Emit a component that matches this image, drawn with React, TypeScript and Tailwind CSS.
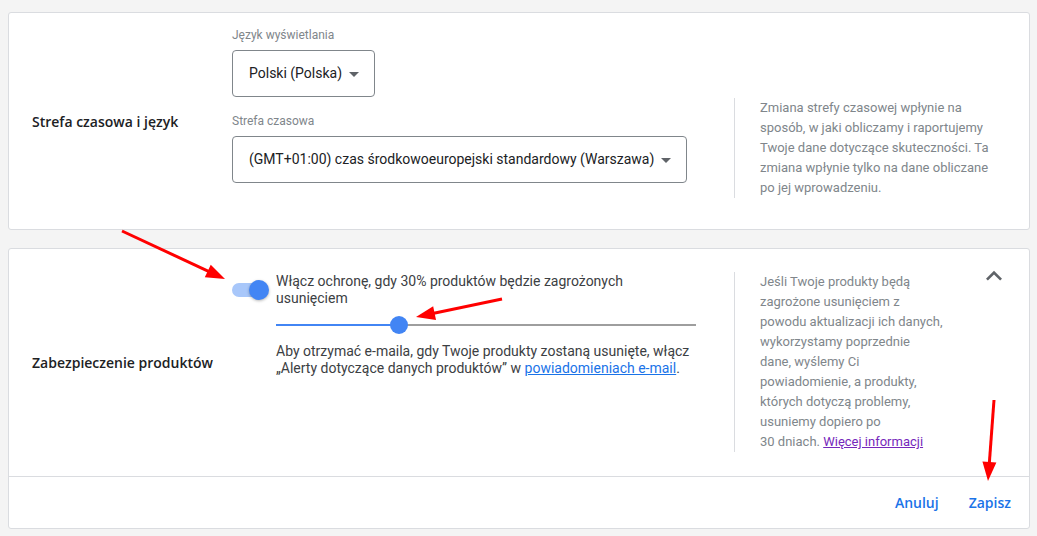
import React from 'react';

const ui = { fontFamily: 'Roboto, "Liberation Sans", Arial, sans-serif' };
const heading = { fontFamily: '"Open Sans", Roboto, "Liberation Sans", sans-serif' };

function SelectBox({ value, width }: { value: string; width: string }) {
  return (
    <div
      className={`flex h-[47px] items-center rounded-[4px] border border-[#80868b] pl-4 pr-2 text-[14px] text-[#202124] ${width}`}
    >
      <span className="whitespace-nowrap">{value}</span>
      <svg viewBox="0 0 24 24" className="h-6 w-6 shrink-0 fill-[#5f6368]">
        <path d="M7 10l5 5 5-5z" />
      </svg>
    </div>
  );
}

function Toggle() {
  return (
    <div className="relative mt-[7px] h-5 w-[37px] shrink-0">
      <div className="absolute left-0 top-[3px] h-[14px] w-[33px] rounded-full bg-[#a8c7fa]" />
      <div className="absolute left-[17px] top-0 h-5 w-5 rounded-full bg-[#4285f4] shadow-[0_1px_3px_rgba(0,0,0,0.3)]" />
    </div>
  );
}

function Slider({ value }: { value: number }) {
  return (
    <div className="relative h-[36px] w-full">
      <div className="absolute left-0 right-0 top-[17px] h-[2px] bg-[#9e9e9e]" />
      <div className="absolute left-0 top-[17px] h-[2px] bg-[#4285f4]" style={{ width: `${value}%` }} />
      <div
        className="absolute top-[9px] h-[18px] w-[18px] -translate-x-1/2 rounded-full bg-[#4285f4]"
        style={{ left: `${value}%` }}
      />
    </div>
  );
}

function Arrow({ x1, y1, x2, y2 }: { x1: number; y1: number; x2: number; y2: number }) {
  const dx = x2 - x1;
  const dy = y2 - y1;
  const len = Math.hypot(dx, dy);
  const ux = dx / len;
  const uy = dy / len;
  const bx = x2 - ux * 19;
  const by = y2 - uy * 19;
  const px = -uy * 7;
  const py = ux * 7;
  return (
    <g>
      <line x1={x1} y1={y1} x2={bx + ux * 2} y2={by + uy * 2} stroke="#f00" strokeWidth={3} />
      <polygon points={`${x2},${y2} ${bx + px},${by + py} ${bx - px},${by - py}`} fill="#f00" />
    </g>
  );
}

const protectionHelp = [
  'Jeśli Twoje produkty będą',
  'zagrożone usunięciem z',
  'powodu aktualizacji ich danych,',
  'wykorzystamy poprzednie',
  'dane, wyślemy Ci',
  'powiadomienie, a produkty,',
  'których dotyczą problemy,',
  'usuniemy dopiero po',
];

export default function App() {
  return (
    <div className="relative min-h-screen bg-[#f4f4f4] pb-[6px] pl-2 pr-[7px] pt-3" style={ui}>
      {/* Strefa czasowa i język */}
      <section className="flex rounded-[3px] border border-[#dadce0] bg-white">
        <div className="flex w-[223px] shrink-0 items-center pl-[23px]">
          <h3 className="text-[14px] font-semibold text-[#202124]" style={heading}>
            Strefa czasowa i język
          </h3>
        </div>
        <div className="w-[502px] shrink-0 pb-[46px] pt-[14px]">
          <div className="mb-[7px] text-[12px] leading-4 text-[#80868b]">Język wyświetlania</div>
          <SelectBox value="Polski (Polska)" width="w-[143px]" />
          <div className="mb-[7px] mt-4 text-[12px] leading-4 text-[#80868b]">Strefa czasowa</div>
          <SelectBox value="(GMT+01:00) czas środkowoeuropejski standardowy (Warszawa)" width="w-[455px]" />
        </div>
        <div className="mt-[85px] self-start border-l border-[#dadce0] pl-[25px]">
          <p className="w-[230px] text-[13px] leading-5 text-[#80868b]">
            Zmiana strefy czasowej wpłynie na sposób, w jaki obliczamy i raportujemy Twoje dane dotyczące
            skuteczności. Ta zmiana wpłynie tylko na dane obliczane po jej wprowadzeniu.
          </p>
        </div>
      </section>

      {/* Zabezpieczenie produktów */}
      <section className="mt-[18px] rounded-[3px] border border-[#dadce0] bg-white">
        <div className="flex">
          <div className="flex w-[223px] shrink-0 items-center pl-[23px]">
            <h3 className="text-[14px] font-semibold text-[#202124]" style={heading}>
              Zabezpieczenie produktów
            </h3>
          </div>
          <div className="flex w-[502px] shrink-0 gap-[7px] pt-[24px]">
            <Toggle />
            <div className="w-[420px] text-[14px] leading-[17px] text-[#3c4043]">
              <p>Włącz ochronę, gdy 30% produktów będzie zagrożonych usunięciem</p>
              <Slider value={29.3} />
              <p>
                Aby otrzymać e-maila, gdy Twoje produkty zostaną usunięte, włącz „Alerty dotyczące danych
                produktów” w{' '}
                <a href="#" className="text-[#1a73e8] underline">
                  powiadomieniach e-mail
                </a>
                .
              </p>
            </div>
          </div>
          <div className="mb-6 mt-[23px] border-l border-[#dadce0] pl-[25px]">
            <p className="w-[195px] text-[13px] leading-5 text-[#80868b]">
              {protectionHelp.map((line) => (
                <span key={line} className="block whitespace-nowrap">
                  {line}
                </span>
              ))}
              <span className="block whitespace-nowrap">
                30 dniach.{' '}
                <a href="#" className="text-[#7627bb] underline">
                  Więcej informacji
                </a>
              </span>
            </p>
          </div>
          <svg viewBox="0 0 24 24" className="ml-[23px] mt-[11px] h-8 w-8 shrink-0 fill-[#5f6368]">
            <path d="M12 8l-6 6 1.41 1.41L12 10.83l4.59 4.58L18 14z" />
          </svg>
        </div>
        <div className="flex h-[52px] items-center justify-end gap-[14px] border-t border-[#dadce0] pr-[10px]">
          <button className="px-2 text-[14px] font-semibold text-[#1a73e8]" style={heading}>
            Anuluj
          </button>
          <button className="px-2 text-[14px] font-semibold text-[#1a73e8]" style={heading}>
            Zapisz
          </button>
        </div>
      </section>

      {/* Annotation arrows */}
      <svg className="pointer-events-none absolute left-0 top-0" width={1037} height={536}>
        <Arrow x1={122} y1={231} x2={225} y2={279} />
        <Arrow x1={502} y1={299} x2={416} y2={317} />
        <Arrow x1={994} y1={400} x2={988} y2={481} />
      </svg>
    </div>
  );
}
